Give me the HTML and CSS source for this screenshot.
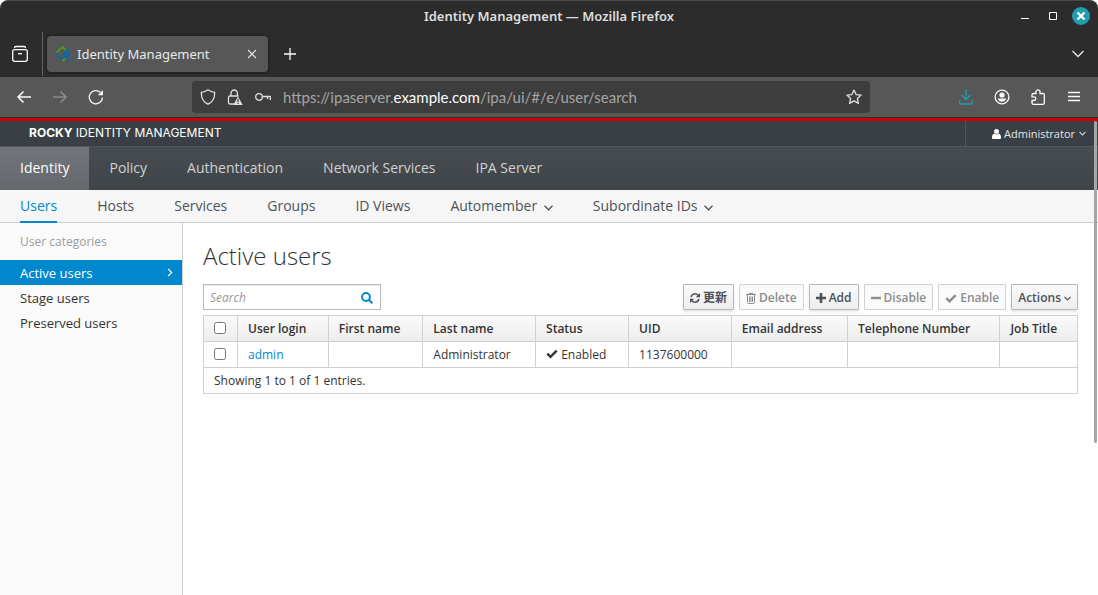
FILE: index.html
```html
<!DOCTYPE html>
<html lang="en">
  <head>
    <meta charset="utf-8">
    <title>Identity Management</title>
    <link rel="stylesheet" href="styles.css">
  </head>

  <body>
    <div class="browser">
      <div class="title-bar">
        <span class="window-title">Identity Management — Mozilla Firefox</span>
        <div class="window-buttons">
          <button type="button" aria-label="Minimize"><svg width="18" height="18" viewBox="0 0 18 18"><path d="M5 11.5h8" stroke="#fff" /></svg></button>
          <button type="button" aria-label="Maximize"><svg width="18" height="18" viewBox="0 0 18 18"><path d="M5.5 5.5h7v7h-7z" fill="none" stroke="#fff" /></svg></button>
          <button type="button" aria-label="Close"><svg width="18" height="18" viewBox="0 0 18 18"><circle cx="9" cy="9" r="9" fill="#1f9eae" /><path d="M5.5 5.5l7 7m0-7l-7 7" stroke="#fff" stroke-width="2.4" /></svg></button>
        </div>
      </div>

      <div class="tab-bar">
        <button type="button" class="recent" aria-label="Recent browsing">
          <svg width="18" height="18" viewBox="0 0 18 18" fill="none" stroke="#fbfbfe" stroke-width="1.3"><path d="M3.5 2.5q.5-1 1.500-1h8q1 0 1.500 1" stroke-linecap="round" /><rect x="1.700" y="4.700" width="14.600" height="11.600" rx="2" /><path d="M7 8.700h4" /></svg>
        </button>
        <div class="tab">
          <svg width="16" height="16" viewBox="0 0 16 16" fill="none" stroke-width="1.800"><path d="M1 7L7.500 1 11 4.500" stroke="#4f9a1c" /><path d="M.6 7.200L7.500 14.500" stroke="#0d68a3" /><path d="M7.500 15l2.500-2.500" stroke="#4f9a1c" /><circle cx="11.500" cy="7.500" r="2.500" stroke="#0d68a3" /><path d="M10.500 10l-2.500 2.500M11 10.500l4.500 5" stroke="#0d68a3" /></svg>
          <span class="tab-title">Identity Management</span>
          <button type="button" aria-label="Close tab"><svg width="10" height="10" viewBox="0 0 10 10"><path d="M1 1l8 8m0-8L1 9" stroke="#e5e5e5" stroke-width="1.1" /></svg></button>
        </div>
        <button type="button" class="new-tab" aria-label="New tab"><svg width="12" height="12" viewBox="0 0 12 12"><path d="M6 0v12M0 6h12" stroke="#fbfbfe" stroke-width="1.3" /></svg></button>
        <button type="button" class="all-tabs" aria-label="List all tabs"><svg width="12" height="8" viewBox="0 0 12 8"><path d="M.5 1L6 6.5 11.5 1" fill="none" stroke="#e8e8e8" stroke-width="1.3" /></svg></button>
      </div>

      <div class="toolbar">
        <div class="history">
          <button type="button" aria-label="Back"><svg width="16" height="16" viewBox="0 0 16 16"><path d="M15 8H2m5.500-5.500L2 8l5.500 5.500" fill="none" stroke="#fbfbfe" stroke-width="1.500" /></svg></button>
          <button type="button" aria-label="Forward" disabled><svg width="16" height="16" viewBox="0 0 16 16"><path d="M1 8h13M8.500 2.500L14 8l-5.500 5.500" fill="none" stroke="#8b8b8b" stroke-width="1.500" /></svg></button>
          <button type="button" aria-label="Reload"><svg width="16" height="16" viewBox="0 0 16 16"><path d="M14.500 8.500A6.600 6.600 0 1 1 12.300 3.300" fill="none" stroke="#fbfbfe" stroke-width="1.300" /><path d="M15 1v5.200H9.800z" fill="#fbfbfe" /></svg></button>
        </div>
        <div class="url-bar">
          <svg width="16" height="16" viewBox="0 0 16 16" fill="none" stroke="#e0e0e0" stroke-width="1.300"><path d="M8 .8c2.300 1.700 4.600 2.400 6.600 2.600.3 5-1.600 9.600-6.600 11.800C3 13 1.100 8.400 1.400 3.400 3.400 3.200 5.700 2.500 8 .8z" /></svg>
          <svg width="16" height="16" viewBox="0 0 16 16"><path d="M4 7V4.200a3.200 3.200 0 0 1 6.400 0V7M7 15H3a1.500 1.500 0 0 1-1.500-1.500v-5A1.500 1.500 0 0 1 3 7h8.500" fill="none" stroke="#e0e0e0" stroke-width="1.300" /><path d="M11 7.500l4.700 8.500H6.300z" fill="#e0e0e0" /><path d="M11 10v3m0 .8v1.200" stroke="#3d3d3d" stroke-width="1.200" /></svg>
          <svg width="18" height="16" viewBox="0 0 18 16" fill="none" stroke="#e0e0e0" stroke-width="1.300"><circle cx="5" cy="8" r="3.300" /><path d="M8.300 7.500h8v3.500M13.500 7.500v2.500" /></svg>
          <span class="url">https://ipaserver.<b>example.com</b>/ipa/ui/#/e/user/search</span>
          <button type="button" aria-label="Bookmark this page"><svg width="16" height="16" viewBox="0 0 16 16"><path d="M8 1l2.100 4.600 5 .5-3.700 3.400 1 4.900L8 11.900l-4.400 2.500 1-4.900L.9 6.100l5-.5z" fill="none" stroke="#e0e0e0" stroke-width="1.300" stroke-linejoin="round" /></svg></button>
        </div>
        <div class="tools">
          <button type="button" aria-label="Downloads"><svg width="16" height="16" viewBox="0 0 16 16" fill="none" stroke="#1f9eae" stroke-width="1.400"><path d="M8 0v10.500M3.500 6L8 10.500 12.500 6M1.700 11.500v2a1.500 1.500 0 0 0 1.500 1.500h9.600a1.500 1.500 0 0 0 1.500-1.500v-2" /></svg></button>
          <button type="button" aria-label="Account"><svg width="16" height="16" viewBox="0 0 16 16"><circle cx="8" cy="8" r="6.900" fill="none" stroke="#fbfbfe" stroke-width="1.300" /><circle cx="8" cy="6" r="2.600" fill="#fbfbfe" /><path d="M3.700 9.500h8.600c-.5 2-2.300 3.300-4.300 3.300s-3.800-1.300-4.300-3.300z" fill="#fbfbfe" /></svg></button>
          <button type="button" aria-label="Extensions"><svg width="16" height="16" viewBox="0 0 16 16"><path d="M6 4.500V2.800a2 2 0 0 1 4 0v1.700h3a1.300 1.300 0 0 1 1.300 1.300V14a1.300 1.300 0 0 1-1.300 1.300H3.300A1.300 1.300 0 0 1 2 14v-2.500h2a1.800 1.800 0 0 0 0-3.600H2V5.800a1.300 1.300 0 0 1 1.300-1.300z" fill="none" stroke="#fbfbfe" stroke-width="1.300" /></svg></button>
          <button type="button" aria-label="Open application menu"><svg width="16" height="16" viewBox="0 0 16 16"><path d="M2 3.500h12M2 7.500h12M2 11.500h12" stroke="#fbfbfe" stroke-width="1.300" /></svg></button>
        </div>
      </div>
    </div>

    <div class="app">
      <header class="header">
        <div class="brand"><b>ROCKY</b> IDENTITY MANAGEMENT</div>
        <a href="#" class="user-menu">
          <svg width="9" height="10" viewBox="0 0 9 10" fill="#fff"><circle cx="4.500" cy="2.500" r="2.500" /><path d="M0 8.500C0 6 1 4.800 2.300 4.800c1.200 1 3.200 1 4.400 0C8 4.800 9 6 9 8.500 9 9.500 8.500 10 7.500 10h-6C.5 10 0 9.500 0 8.500z" /></svg>
          <span>Administrator</span>
          <svg width="7" height="5" viewBox="0 0 7 5"><path d="M.5 .8l3 3 3-3" fill="none" stroke="#d1d1d1" stroke-width="1.200" /></svg>
        </a>
      </header>

      <nav class="main-nav">
        <a href="#" class="active">Identity</a>
        <a href="#">Policy</a>
        <a href="#">Authentication</a>
        <a href="#">Network Services</a>
        <a href="#">IPA Server</a>
      </nav>

      <nav class="sub-nav">
        <a href="#" class="active">Users</a>
        <a href="#">Hosts</a>
        <a href="#">Services</a>
        <a href="#">Groups</a>
        <a href="#">ID Views</a>
        <a href="#">Automember <svg width="9" height="6" viewBox="0 0 9 6"><path d="M.5 .8l4 4 4-4" fill="none" stroke="#4d5258" stroke-width="1.300" /></svg></a>
        <a href="#">Subordinate IDs <svg width="9" height="6" viewBox="0 0 9 6"><path d="M.5 .8l4 4 4-4" fill="none" stroke="#4d5258" stroke-width="1.300" /></svg></a>
      </nav>

      <div class="main">
        <aside class="sidebar">
          <h2>User categories</h2>
          <a href="#" class="active">Active users <svg width="6" height="9" viewBox="0 0 6 9"><path d="M1 .8l3.700 3.700L1 8.200" fill="none" stroke="#fff" stroke-width="1.200" /></svg></a>
          <a href="#">Stage users</a>
          <a href="#">Preserved users</a>
        </aside>

        <main class="content">
          <h1>Active users</h1>

          <div class="controls">
            <form class="search" onsubmit="return false;">
              <input type="text" id="search" placeholder="Search" aria-label="Search">
              <button type="submit" aria-label="Find"><svg width="12" height="12" viewBox="0 0 12 12" fill="none" stroke="#0088ce" stroke-width="2"><circle cx="5" cy="5" r="3.900" /><path d="M7.800 7.800l3.500 3.500" /></svg></button>
            </form>
            <div class="actions">
              <button type="button" class="btn">
                <svg width="10" height="12" viewBox="0 0 10 12"><path d="M1 5A4 4 0 0 1 8 3.300M9 7a4 4 0 0 1-7 1.700" fill="none" stroke="#4d5258" stroke-width="1.600" /><path d="M10 1v4.200H5.800zM0 11V6.800h4.200z" fill="#4d5258" /></svg>
                更新
              </button>
              <button type="button" class="btn" disabled>
                <svg width="10" height="12" viewBox="0 0 10 12" fill="none" stroke="#8b8d8f"><path d="M0 2.500h10M3 2.500v-1h4v1M1.500 3v7.500a1 1 0 0 0 1 1h5a1 1 0 0 0 1-1V3M3.500 4.500V10M5 4.500V10M6.500 4.500V10" /></svg>
                Delete
              </button>
              <button type="button" class="btn">
                <svg width="10" height="12" viewBox="0 0 10 12"><path d="M5 1v10M0 6h10" stroke="#4d5258" stroke-width="2.600" /></svg>
                Add
              </button>
              <button type="button" class="btn" disabled>
                <svg width="10" height="12" viewBox="0 0 10 12"><path d="M0 6h10" stroke="#8b8d8f" stroke-width="2.400" /></svg>
                Disable
              </button>
              <button type="button" class="btn" disabled>
                <svg width="12" height="12" viewBox="0 0 12 12"><path d="M1.300 6.200l3.200 3.200 6.200-6.200" fill="none" stroke="#8b8d8f" stroke-width="2.400" /></svg>
                Enable
              </button>
              <button type="button" class="btn">
                Actions
                <svg width="7" height="5" viewBox="0 0 7 5"><path d="M.5 .8l3 3 3-3" fill="none" stroke="#4d5258" stroke-width="1.200" /></svg>
              </button>
            </div>
          </div>

          <table class="users">
            <thead>
              <tr>
                <th class="check"><input type="checkbox" aria-label="Select all"></th>
                <th>User login</th>
                <th>First name</th>
                <th>Last name</th>
                <th>Status</th>
                <th>UID</th>
                <th>Email address</th>
                <th>Telephone Number</th>
                <th>Job Title</th>
              </tr>
            </thead>
            <tbody>
              <tr>
                <td class="check"><input type="checkbox" aria-label="Select admin"></td>
                <td><a href="#">admin</a></td>
                <td></td>
                <td>Administrator</td>
                <td><svg width="12" height="10" viewBox="0 0 12 10"><path d="M1.300 4.700l3.200 3.200 6.200-6.200" fill="none" stroke="#333" stroke-width="2.400" /></svg> Enabled</td>
                <td>1137600000</td>
                <td></td>
                <td></td>
                <td></td>
              </tr>
            </tbody>
            <tfoot>
              <tr>
                <td colspan="9">Showing 1 to 1 of 1 entries.</td>
              </tr>
            </tfoot>
          </table>
        </main>
      </div>
      <div class="scroll-thumb"></div>
    </div>
  </body>
</html>
```

FILE: styles.css
```css
* {
  box-sizing: border-box;
}
body {
  margin: 0;
  min-height: 100vh;
  display: flex;
  flex-direction: column;
  font-family: "Open Sans", "Noto Sans CJK JP", sans-serif;
  font-size: 12px;
  line-height: 20px;
  color: #333;
  background: #fff;
}
a {
  text-decoration: none;
}
button {
  font: inherit;
  cursor: pointer;
}
svg {
  flex: none;
}

/* browser window */
.browser {
  color: #fbfbfe;
  font-family: "Noto Sans", sans-serif;
  background: #2c2c2c;
  border-top: 1px solid #484848;
  border-bottom: 1px solid #2b2b2b;
  border-radius: 8px 8px 0 0;
}
.browser button {
  display: flex;
  padding: 0;
  border: 0;
  background: none;
}
.title-bar {
  display: grid;
  grid-template-columns: 1fr auto 1fr;
  align-items: center;
  height: 30px;
}
.window-title {
  grid-column: 2;
  font-size: 13px;
  font-weight: 600;
  color: #dedede;
}
.window-buttons {
  display: flex;
  justify-content: flex-end;
  gap: 10px;
  padding-right: 8px;
}
.tab-bar {
  display: flex;
  align-items: center;
  height: 46px;
  padding-right: 14px;
}
.browser .recent {
  width: 43px;
  height: 44px;
  align-items: center;
  padding-left: 11px;
  border-right: 1px solid #606060;
}
.tab {
  display: flex;
  align-items: center;
  gap: 6px;
  width: 221px;
  height: 36px;
  margin-left: 4px;
  padding: 0 11px 0 8px;
  border-radius: 4px;
  background: #575757;
  box-shadow: 0 0 3px rgba(0, 0, 0, 0.6);
}
.tab-title {
  flex: 1;
  font-size: 13px;
  color: #e8e8e8;
}
.new-tab {
  margin-left: 16px;
}
.all-tabs {
  margin-left: auto;
}
.toolbar {
  display: flex;
  align-items: center;
  height: 40px;
  background: #575757;
}
.history {
  display: flex;
  gap: 20px;
  width: 192px;
  padding-left: 16px;
}
.url-bar {
  display: flex;
  flex: 1;
  align-items: center;
  gap: 11px;
  height: 32px;
  padding: 0 8px;
  border-radius: 4px;
  background: #3d3d3d;
}
.url {
  flex: 1;
  font-family: Lato, sans-serif;
  font-size: 15px;
  color: #a5a5a5;
}
.url b {
  font-weight: 400;
  color: #fbfbfe;
}
.tools {
  display: flex;
  justify-content: flex-end;
  gap: 20px;
  width: 228px;
  padding-right: 16px;
}

/* application */
.app {
  position: relative;
  display: flex;
  flex: 1;
  flex-direction: column;
  border-top: 3px solid #c00;
}
.header {
  display: flex;
  justify-content: space-between;
  height: 26px;
  border-bottom: 1px solid #53565b;
  background: #393f45;
  color: #fff;
}
.brand {
  padding-left: 29px;
  font-family: Inter, sans-serif;
  line-height: 24px;
}
.user-menu {
  display: flex;
  align-items: center;
  gap: 3px;
  padding: 0 12px 0 26px;
  border-left: 1px solid #53565b;
  font-size: 11px;
  color: #e5e5e5;
}
.user-menu span {
  margin-right: 1px;
}
.main-nav {
  display: flex;
  height: 43px;
  font-size: 14px;
  line-height: 42px;
  background: linear-gradient(#474c50, #3f4448);
}
.main-nav a {
  padding: 0 20px;
  color: #d1d1d1;
}
.main-nav .active {
  color: #fff;
  background: linear-gradient(#72757a, #64676c);
}
.sub-nav {
  display: flex;
  gap: 40px;
  height: 33px;
  padding: 0 20px;
  border-bottom: 1px solid #cecdcd;
  font-size: 14px;
  line-height: 31px;
  background: #f6f6f6;
}
.sub-nav a {
  height: 33px;
  color: #4d5258;
}
.sub-nav svg {
  margin-left: 3px;
}
.sub-nav .active {
  border-bottom: 2px solid #0088ce;
  color: #0088ce;
}
.main {
  display: flex;
  flex: 1;
}
.sidebar {
  width: 183px;
  border-right: 1px solid #cecdcd;
  background: #fafafa;
}
.sidebar h2 {
  margin: 9px 0 8px;
  padding-left: 20px;
  font-size: 12px;
  font-weight: 400;
  color: #9c9c9c;
}
.sidebar a {
  display: flex;
  align-items: center;
  justify-content: space-between;
  height: 25px;
  padding: 0 9px 0 20px;
  font-size: 13px;
  color: #333;
}
.sidebar .active {
  color: #fff;
  background: #0088ce;
}
.content {
  flex: 1;
  padding: 20px 20px 0;
}
h1 {
  margin: 0 0 16px;
  font-size: 24px;
  font-weight: 300;
  line-height: 25px;
}
.controls {
  display: flex;
  justify-content: space-between;
  margin-bottom: 5px;
}
.search {
  display: flex;
  align-items: center;
  width: 178px;
  height: 26px;
  padding: 1px 7px 0 6px;
  border: 1px solid #bababa;
  box-shadow: inset 0 1px 1px rgba(0, 0, 0, 0.08);
}
.search input {
  flex: 1;
  min-width: 0;
  height: 22px;
  padding: 0;
  border: 0;
  outline: 0;
  font: inherit;
  background: none;
}
.search input::placeholder {
  font-style: italic;
  color: #999;
}
.search button {
  display: flex;
  padding: 0;
  border: 0;
  background: none;
}
.actions {
  display: flex;
  gap: 5px;
}
.btn {
  display: flex;
  align-items: center;
  gap: 3px;
  height: 26px;
  padding: 2px 6px 0;
  border: 1px solid #b7b7b7;
  border-radius: 1px;
  font-weight: 600;
  color: #4d5258;
  background: linear-gradient(#fafafa, #ededed);
  box-shadow: 0 2px 3px rgba(0, 0, 0, 0.1);
}
.btn:disabled {
  border-color: #d1d1d1;
  color: #8b8d8f;
  background: #fafafa;
  box-shadow: none;
}

.users {
  width: 100%;
  border: 1px solid #d1d1d1;
  border-collapse: collapse;
}
.users th,
.users td {
  height: 26px;
  padding: 2px 10px;
  border: 1px solid #d1d1d1;
  text-align: left;
  white-space: nowrap;
}
.users thead {
  background: linear-gradient(#fafafa, #ededed);
}
.users th {
  font-weight: 600;
}
.users a {
  color: #0088ce;
}
.users .check {
  width: 34px;
  padding-bottom: 4px;
}
.users input {
  display: block;
  width: 12px;
  height: 12px;
  margin: 0;
}

.scroll-thumb {
  position: absolute;
  top: 0;
  right: 1px;
  width: 3px;
  height: 322px;
  border-radius: 2px;
  background: #a6a6a6;
}
```
